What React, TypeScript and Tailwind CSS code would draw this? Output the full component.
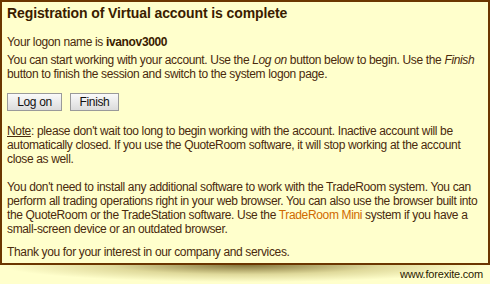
import React from "react";

export default function App() {
  return (
    <div
      className="w-[490px] h-[284px] bg-[#ffffcc] text-[#4a2a0c] overflow-hidden"
      style={{ fontFamily: '"Liberation Sans", Arial, sans-serif' }}
    >
      <div className="border-2 border-[#6b3600] h-[265px] px-[5px] pt-[3px]">
        <h1 className="text-[14px] font-bold leading-[17px] text-[#3a1c00] tracking-[-0.1px]">
          Registration of Virtual account is complete
        </h1>

        <div className="text-[12px] leading-[14px] tracking-[-0.35px]">
          <p className="mt-[13px]">
            Your logon name is <b className="text-[#3a1c00]">ivanov3000</b>
          </p>
          <p className="mt-[4px]">
            You can start working with your account. Use the <i>Log on</i> button below to begin. Use
            the <i>Finish</i> button to finish the session and switch to the system logon page.
          </p>

          <div className="flex gap-[8px] mt-[12px]">
            <button className="h-[18px] w-[55px] border border-[#9a9a9a] bg-gradient-to-b from-[#fafafa] to-[#dcdcdc] text-[12px] text-[#111] leading-none">
              Log on
            </button>
            <button className="h-[18px] w-[49px] border border-[#9a9a9a] bg-gradient-to-b from-[#fafafa] to-[#dcdcdc] text-[12px] text-[#111] leading-none">
              Finish
            </button>
          </div>

          <p className="mt-[13px]">
            <span className="underline">Note</span>: please don't wait too long to begin working with
            the account. Inactive account will be automatically closed. If you use the QuoteRoom
            software, it will stop working at the account close as well.
          </p>

          <p className="mt-[14px]">
            You don't need to install any additional software to work with the TradeRoom system. You
            can perform all trading operations right in your web browser. You can also use the browser
            built into the QuoteRoom or the TradeStation software. Use the{" "}
            <a className="text-[#d06a00]">TradeRoom Mini</a> system if you have a small-screen device
            or an outdated browser.
          </p>

          <p className="mt-[9px]">Thank you for your interest in our company and services.</p>
        </div>
      </div>

      <div className="h-[19px] flex justify-end items-center pr-[7px] bg-[radial-gradient(ellipse_50%_90%_at_50%_0%,rgba(90,70,10,0.75),rgba(150,130,40,0.3)_55%,transparent_100%)]">
        <span className="text-[11px] text-[#2a1a00] tracking-[-0.2px]">www.forexite.com</span>
      </div>
    </div>
  );
}
